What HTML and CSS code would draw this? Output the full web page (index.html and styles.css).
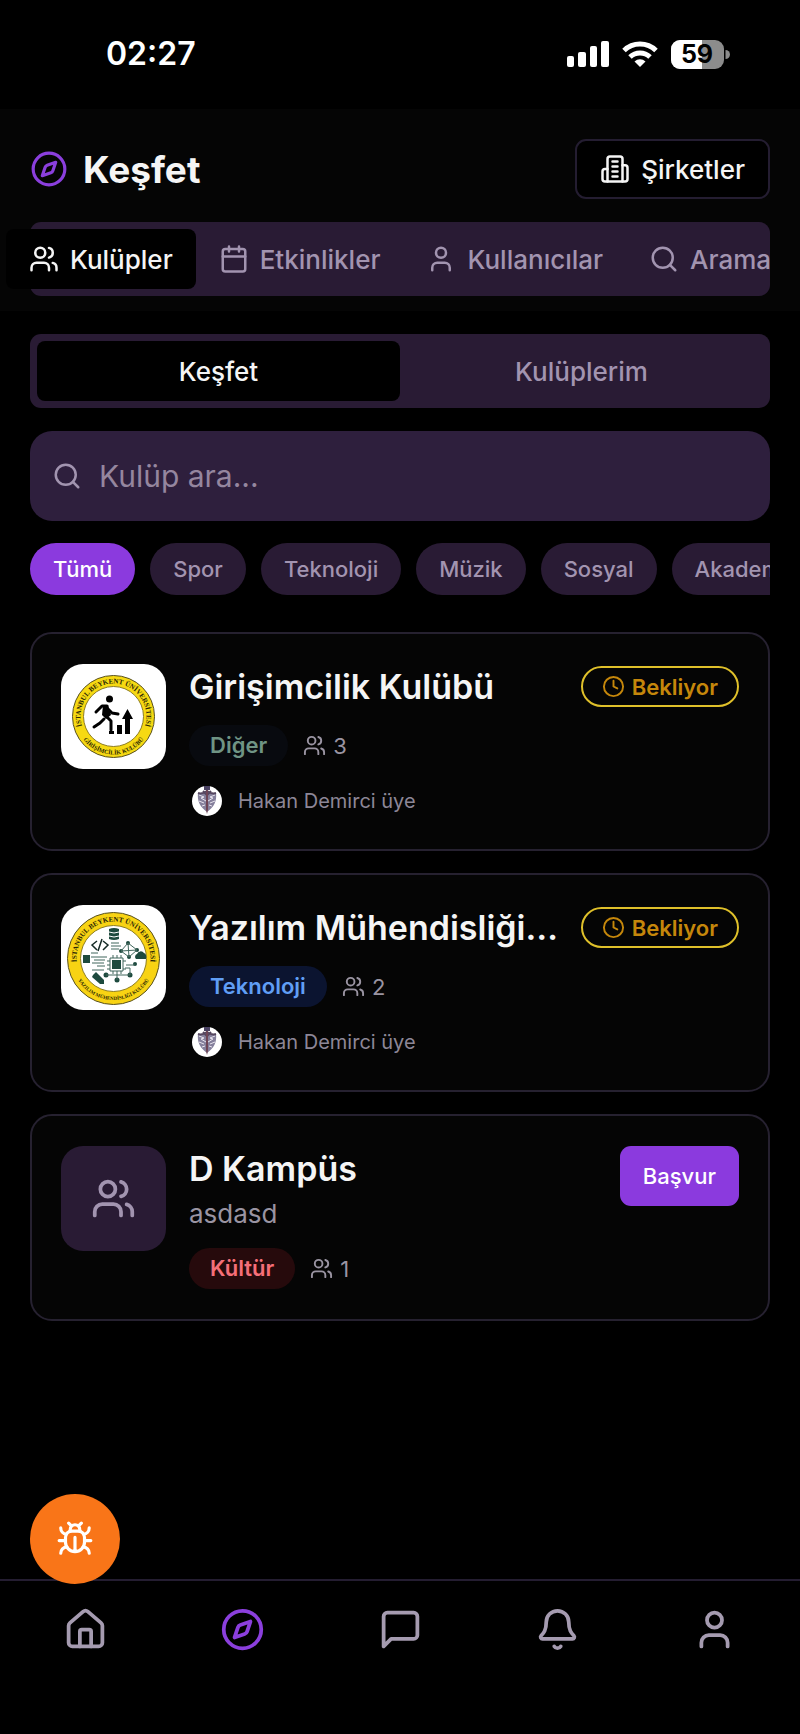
FILE: index.html
```html
<!DOCTYPE html>
<html lang="tr">
<head>
    <meta charset="UTF-8">
    <meta name="viewport" content="width=device-width, initial-scale=1.0">
    <title>Keşfet</title>
    <link rel="stylesheet" href="styles.css">
</head>
<body>
    <!-- Shared icons -->
    <svg class="sprite" aria-hidden="true">
        <symbol id="compass" viewBox="0 0 24 24">
            <path d="m16.24 7.76-1.804 5.411a2 2 0 0 1-1.265 1.265L7.76 16.24l1.804-5.411a2 2 0 0 1 1.265-1.265z"/>
            <circle cx="12" cy="12" r="10"/>
        </symbol>
        <symbol id="building" viewBox="0 0 24 24">
            <path d="M6 22V4a2 2 0 0 1 2-2h8a2 2 0 0 1 2 2v18Z"/>
            <path d="M6 12H4a2 2 0 0 0-2 2v6a2 2 0 0 0 2 2h2M18 9h2a2 2 0 0 1 2 2v9a2 2 0 0 1-2 2h-2"/>
            <path d="M10 6h4M10 10h4M10 14h4M10 18h4"/>
        </symbol>
        <symbol id="users" viewBox="0 0 24 24">
            <path d="M16 21v-2a4 4 0 0 0-4-4H6a4 4 0 0 0-4 4v2"/>
            <circle cx="9" cy="7" r="4"/>
            <path d="M22 21v-2a4 4 0 0 0-3-3.87M16 3.13a4 4 0 0 1 0 7.75"/>
        </symbol>
        <symbol id="calendar" viewBox="0 0 24 24">
            <path d="M8 2v4M16 2v4M3 10h18"/>
            <rect x="3" y="4" width="18" height="18" rx="2"/>
        </symbol>
        <symbol id="user" viewBox="0 0 24 24">
            <path d="M19 21v-2a4 4 0 0 0-4-4H9a4 4 0 0 0-4 4v2"/>
            <circle cx="12" cy="7" r="4"/>
        </symbol>
        <symbol id="search" viewBox="0 0 24 24">
            <circle cx="11" cy="11" r="8"/>
            <path d="m21 21-4.3-4.3"/>
        </symbol>
        <symbol id="clock" viewBox="0 0 24 24">
            <circle cx="12" cy="12" r="10"/>
            <path d="M12 6v6l4 2"/>
        </symbol>
        <symbol id="home" viewBox="0 0 24 24">
            <path d="M15 21v-8a1 1 0 0 0-1-1h-4a1 1 0 0 0-1 1v8"/>
            <path d="M3 10a2 2 0 0 1 .709-1.528l7-5.999a2 2 0 0 1 2.582 0l7 5.999A2 2 0 0 1 21 10v9a2 2 0 0 1-2 2H5a2 2 0 0 1-2-2z"/>
        </symbol>
        <symbol id="message" viewBox="0 0 24 24">
            <path d="M21 15a2 2 0 0 1-2 2H7l-4 4V5a2 2 0 0 1 2-2h14a2 2 0 0 1 2 2z"/>
        </symbol>
        <symbol id="bell" viewBox="0 0 24 24">
            <path d="M10.268 21a2 2 0 0 0 3.464 0"/>
            <path d="M3.262 15.326A1 1 0 0 0 4 17h16a1 1 0 0 0 .74-1.673C19.41 13.956 18 12.499 18 8A6 6 0 0 0 6 8c0 4.499-1.411 5.956-2.738 7.326"/>
        </symbol>
        <symbol id="bug" viewBox="0 0 24 24">
            <path d="m8 2 1.88 1.88M14.12 3.88 16 2M9 7.13v-1a3.003 3.003 0 1 1 6 0v1"/>
            <path d="M12 20c-3.3 0-6-2.7-6-6v-3a4 4 0 0 1 4-4h4a4 4 0 0 1 4 4v3c0 3.3-2.7 6-6 6M12 20v-9"/>
            <path d="M6.53 9C4.6 8.8 3 7.1 3 5M6 13H2M3 21c0-2.1 1.7-3.9 3.8-4M20.97 5c0 2.1-1.6 3.8-3.5 4M22 13h-4M17.2 17c2.1.1 3.8 1.9 3.8 4"/>
        </symbol>
        <symbol id="avatar" viewBox="0 0 30 30">
            <circle cx="15" cy="15" r="15" fill="#fff"/>
            <path d="M12 0h6v4h-6z" fill="#4a4262"/>
            <path d="M6 7c3 1 6 0 9-2 3 2 6 3 9 2 1 8-2 14-9 19C8 21 5 15 6 7z" fill="#85809c"/>
            <path d="M7 9l5 2-3 1 5 3M23 9l-5 2 3 1-5 3M7 15l5 2M23 15l-5 2M10 20l3-1M20 20l-3-1" fill="none" stroke="#e8e4ee"/>
            <path d="M6 7c3 1 6 0 9-2 3 2 6 3 9 2M11 5l4 4 4-4" fill="none" stroke="#55465f" stroke-width="2"/>
            <path d="M14 4h2v20l-1 4-1-4z" fill="#6e4556"/>
        </symbol>
    </svg>

    <div class="status-bar">
        <span class="time">02:27</span>
        <div class="status-icons">
            <svg width="42" height="28" viewBox="0 0 42 28" fill="#fff" aria-hidden="true">
                <rect x="0" y="16" width="7" height="11" rx="2"/>
                <rect x="11" y="12" width="8" height="15" rx="2"/>
                <rect x="23" y="6" width="7" height="21" rx="2"/>
                <rect x="34" y="1" width="8" height="26" rx="2"/>
            </svg>
            <svg width="36" height="28" viewBox="0 0 36 28" fill="none" stroke="#fff" stroke-width="5" aria-hidden="true">
                <path d="M2 10.5a23 23 0 0 1 32 0"/>
                <path d="M8 17a14.5 14.5 0 0 1 20 0"/>
                <path d="M12.5 21.5a8 8 0 0 1 11 0L18 27z" fill="#fff" stroke="none"/>
            </svg>
            <svg width="59" height="30" viewBox="0 0 59 30" aria-label="Pil yüzde 59">
                <rect y="1" width="53" height="29" rx="9" fill="#8c8c8c"/>
                <path d="M31 1H9a9 9 0 0 0-9 9v11a9 9 0 0 0 9 9h22z" fill="#fff"/>
                <path d="M54.5 11a4.5 4.5 0 0 1 0 9z" fill="#8c8c8c"/>
                <text class="battery-text" x="26" y="24">59</text>
            </svg>
        </div>
    </div>

    <header class="header">
        <div class="title-row">
            <svg class="icon icon-title"><use href="#compass"/></svg>
            <h1>Keşfet</h1>
            <button type="button" class="companies"><svg class="icon"><use href="#building"/></svg>Şirketler</button>
        </div>
        <div class="tabs">
            <button type="button" class="tab active"><svg class="icon"><use href="#users"/></svg>Kulüpler</button>
            <button type="button" class="tab"><svg class="icon"><use href="#calendar"/></svg>Etkinlikler</button>
            <button type="button" class="tab"><svg class="icon"><use href="#user"/></svg>Kullanıcılar</button>
            <button type="button" class="tab"><svg class="icon"><use href="#search"/></svg>Arama</button>
        </div>
    </header>

    <main class="content">
        <div class="segments">
            <button type="button" class="segment active">Keşfet</button>
            <button type="button" class="segment">Kulüplerim</button>
        </div>

        <label class="search">
            <svg class="icon"><use href="#search"/></svg>
            <input type="text" placeholder="Kulüp ara..." aria-label="Kulüp ara">
        </label>

        <div class="chips">
            <button type="button" class="chip active">Tümü</button>
            <button type="button" class="chip">Spor</button>
            <button type="button" class="chip">Teknoloji</button>
            <button type="button" class="chip">Müzik</button>
            <button type="button" class="chip">Sosyal</button>
            <button type="button" class="chip">Akademik</button>
        </div>

        <div class="clubs">
            <article class="card">
                <svg class="logo" viewBox="0 0 105 105" aria-hidden="true">
                    <rect width="105" height="105" fill="#fff"/>
                    <circle cx="52.5" cy="52.5" r="41" fill="#f6d912" stroke="#57501f"/>
                    <circle cx="52.5" cy="52.5" r="30" fill="#fff" stroke="#8d7d22"/>
                    <path id="arcTop1" d="M22.4 66a33 33 0 1 1 60.2 0" fill="none"/>
                    <path id="arcBottom1" d="M14.5 52.5a38 38 0 0 0 76 0" fill="none"/>
                    <text class="logo-text"><textPath href="#arcTop1" startOffset="50%">İSTANBUL BEYKENT ÜNİVERSİTESİ</textPath></text>
                    <text class="logo-text logo-text-medium"><textPath href="#arcBottom1" startOffset="50%">GİRİŞİMCİLİK KULÜBÜ</textPath></text>
                    <circle cx="48.5" cy="35" r="3.5"/>
                    <path d="M46 42l-5 0-6 6M44 42l1 10 5 5 0 9M45 43l6 6 6 1M43 55l-4 4-6 4" fill="none" stroke="#000" stroke-width="3" stroke-linecap="round" stroke-linejoin="round"/>
                    <path d="M42 41h5l3 10-5 4-4-4z"/>
                    <path d="M48 67h5v3h-5zM56 61h5v9h-5zM64 70V55h-3l5.5-10 5.5 10h-3v15z"/>
                </svg>
                <div class="info">
                    <div class="card-head">
                        <h2>Girişimcilik Kulübü</h2>
                        <span class="pending"><svg class="icon icon-small"><use href="#clock"/></svg>Bekliyor</span>
                    </div>
                    <div class="meta">
                        <span class="tag tag-other">Diğer</span>
                        <span class="count"><svg class="icon icon-small"><use href="#users"/></svg>3</span>
                    </div>
                    <div class="member"><svg class="avatar"><use href="#avatar"/></svg>Hakan Demirci üye</div>
                </div>
            </article>

            <article class="card">
                <svg class="logo" viewBox="0 0 105 105" aria-hidden="true">
                    <rect width="105" height="105" fill="#fff"/>
                    <circle cx="52.5" cy="53.5" r="46" fill="#f8d313" stroke="#57501f"/>
                    <circle cx="52.5" cy="53.5" r="33" fill="#fff" stroke="#8d7d22"/>
                    <path id="arcTop2" d="M18.9 69a37 37 0 1 1 67.2 0" fill="none"/>
                    <path id="arcBottom2" d="M11 53.5a41.5 41.5 0 0 0 83 0" fill="none"/>
                    <text class="logo-text"><textPath href="#arcTop2" startOffset="50%">İSTANBUL BEYKENT ÜNİVERSİTESİ</textPath></text>
                    <text class="logo-text logo-text-small"><textPath href="#arcBottom2" startOffset="50%">YAZILIM MÜHENDİSLİĞİ KULÜBÜ</textPath></text>
                    <g fill="#1d4a3e">
                        <path d="M48 24q5-2 10 0v10q-5 2-10 0zM22 50h7v8h-7z"/>
                        <path d="M75 54a3 3 0 0 1 1-5 4 4 0 0 1 7-1q3 1 2 6z"/>
                        <path d="M32 70l3-3 8 8v4h-4l-8-7z"/>
                        <circle cx="67" cy="38" r="2"/><circle cx="60" cy="46" r="2"/><circle cx="76" cy="45" r="2"/>
                        <circle cx="68" cy="52" r="2"/><circle cx="74" cy="59" r="2"/><circle cx="69" cy="70" r="2.5"/>
                        <circle cx="45" cy="70" r="2.5"/><circle cx="56" cy="75" r="2.5"/>
                        <path d="M51 55h9v9h-9z"/>
                    </g>
                    <g fill="none" stroke="#41675d">
                        <path d="M49 53h13v13H49zM52 50v3M56 50v3M60 50v3M52 66v3M60 66v3M46 56h3M46 60h3M46 64h3M62 56h3M62 64h3"/>
                        <path d="M67 38l-7 8 8 6 8-7zM67 38l1 14M60 46l16-1M65 60h9M56 66v9M45 70h24M69 70v-7h-5"/>
                        <path d="M50 38h8M50 41h10M50 44h8M30 48h7M30 52h16M33 55h11M31 58h12M36 61h8M31 65h12"/>
                        <path d="M48 27q5 2 10 0M48 31q5 2 10 0" stroke="#fff"/>
                    </g>
                    <path d="M36 36l-5 4 5 5M42 36l5 4-5 5M41 34l-4 12" fill="none" stroke="#152a26" stroke-width="1.5"/>
                </svg>
                <div class="info">
                    <div class="card-head">
                        <h2>Yazılım Mühendisliği Kulübü</h2>
                        <span class="pending"><svg class="icon icon-small"><use href="#clock"/></svg>Bekliyor</span>
                    </div>
                    <div class="meta">
                        <span class="tag tag-tech">Teknoloji</span>
                        <span class="count"><svg class="icon icon-small"><use href="#users"/></svg>2</span>
                    </div>
                    <div class="member"><svg class="avatar"><use href="#avatar"/></svg>Hakan Demirci üye</div>
                </div>
            </article>

            <article class="card">
                <div class="logo logo-empty"><svg class="icon icon-large"><use href="#users"/></svg></div>
                <div class="info">
                    <h2>D Kampüs</h2>
                    <p>asdasd</p>
                    <div class="meta">
                        <span class="tag tag-culture">Kültür</span>
                        <span class="count"><svg class="icon icon-small"><use href="#users"/></svg>1</span>
                    </div>
                </div>
                <button type="button" class="apply">Başvur</button>
            </article>
        </div>
    </main>

    <nav class="bottom-nav">
        <button type="button" class="report" aria-label="Hata bildir"><svg class="icon icon-title"><use href="#bug"/></svg></button>
        <a href="#" aria-label="Ana sayfa"><svg class="icon icon-large"><use href="#home"/></svg></a>
        <a href="#" class="active" aria-label="Keşfet"><svg class="icon icon-large"><use href="#compass"/></svg></a>
        <a href="#" aria-label="Mesajlar"><svg class="icon icon-large"><use href="#message"/></svg></a>
        <a href="#" aria-label="Bildirimler"><svg class="icon icon-large"><use href="#bell"/></svg></a>
        <a href="#" aria-label="Profil"><svg class="icon icon-large"><use href="#user"/></svg></a>
    </nav>
</body>
</html>
```

FILE: styles.css
```css
* {
    box-sizing: border-box;
}
body {
    margin: 0;
    min-height: 100vh;
    display: flex;
    flex-direction: column;
    background-color: #000;
    color: #f5f5f5;
    font-family: Inter, sans-serif;
    font-size: 26px;
}
h1, h2, p {
    margin: 0;
}
button {
    border: none;
    font-family: inherit;
    font-size: 26px;
    font-weight: 500;
    cursor: pointer;
}
.sprite {
    position: absolute;
    width: 0;
    height: 0;
}
.icon {
    width: 30px;
    height: 30px;
    flex-shrink: 0;
    fill: none;
    stroke: currentColor;
    stroke-width: 2;
    stroke-linecap: round;
    stroke-linejoin: round;
}
.icon-small {
    width: 23px;
    height: 23px;
}
.icon-title {
    width: 38px;
    height: 38px;
}
.icon-large {
    width: 45px;
    height: 45px;
}

/* Status bar */
.status-bar {
    display: flex;
    justify-content: space-between;
    align-items: center;
    height: 109px;
    padding: 0 70px 2px 106px;
}
.time {
    font-size: 32px;
    font-weight: 600;
    color: #fff;
}
.status-icons {
    display: flex;
    align-items: center;
    gap: 13px;
}
.battery-text {
    font-size: 25px;
    font-weight: 700;
    text-anchor: middle;
}

/* Header */
.header {
    padding: 30px 30px 15px;
    background-color: #050505;
}
.title-row {
    display: flex;
    align-items: center;
    gap: 15px;
    margin-bottom: 23px;
}
.title-row .icon-title {
    color: #8b3fdd;
}
h1 {
    flex: 1;
    font-size: 37px;
    font-weight: 700;
}
.companies {
    display: flex;
    align-items: center;
    gap: 11px;
    height: 60px;
    padding: 0 23px;
    border: 2px solid #241d31;
    border-radius: 11px;
    background-color: #000;
    color: #f5f5f5;
}
.tabs {
    display: flex;
    justify-content: center;
    padding: 7px;
    border-radius: 11px;
    background-color: #291b34;
}
.tab {
    display: flex;
    flex-shrink: 0;
    align-items: center;
    gap: 11px;
    height: 60px;
    padding: 0 23px;
    border-radius: 8px;
    background: none;
    color: #a294b0;
}
.tab.active, .segment.active {
    background-color: #000;
    color: #f5f5f5;
}

/* Content */
.content {
    flex: 1;
    padding: 23px 30px;
}
.segments {
    display: flex;
    padding: 7px;
    border-radius: 11px;
    background-color: #291b34;
}
.segment {
    flex: 1;
    height: 60px;
    border-radius: 8px;
    background: none;
    color: #a294b0;
}
.search {
    display: flex;
    align-items: center;
    gap: 17px;
    height: 90px;
    margin: 23px 0 22px;
    padding: 0 22px;
    border-radius: 22px;
    background-color: #2e1f3d;
    color: #a294b0;
}
.search input {
    flex: 1;
    min-width: 0;
    padding: 0;
    border: none;
    outline: none;
    background: none;
    color: #f5f5f5;
    font-family: inherit;
    font-size: 30px;
}
.search input::placeholder {
    color: #95869f;
}
.chips {
    display: flex;
    gap: 15px;
    overflow: hidden;
}
.chip {
    flex-shrink: 0;
    height: 52px;
    padding: 0 23px;
    border-radius: 26px;
    background-color: #291b34;
    color: #a294b0;
    font-size: 22px;
}
.chip.active {
    background-color: #8b3ade;
    color: #fff;
}

/* Club cards */
.clubs {
    display: flex;
    flex-direction: column;
    gap: 22px;
    margin-top: 37px;
}
.card {
    display: flex;
    align-items: flex-start;
    gap: 23px;
    padding: 30px 29px;
    border: 2px solid #262130;
    border-radius: 22px;
    background-color: #050505;
}
.logo {
    width: 105px;
    height: 105px;
    flex-shrink: 0;
    border-radius: 22px;
}
.logo-empty {
    display: flex;
    align-items: center;
    justify-content: center;
    background-color: #291b34;
    color: #a294b0;
}
.logo-text {
    font-family: "Liberation Serif", serif;
    font-size: 7px;
    font-weight: 700;
    fill: #2b2705;
    text-anchor: middle;
}
.logo-text-medium {
    font-size: 6px;
}
.logo-text-small {
    font-size: 5px;
}
.info {
    flex: 1;
    min-width: 0;
}
.card-head {
    display: flex;
    align-items: center;
    justify-content: space-between;
    gap: 22px;
}
h2 {
    overflow: hidden;
    font-size: 34px;
    font-weight: 600;
    line-height: 45px;
    text-overflow: ellipsis;
    white-space: nowrap;
}
.info p {
    margin-top: 4px;
    color: #9a94a2;
    line-height: 37px;
}
.pending {
    display: flex;
    flex-shrink: 0;
    align-items: center;
    gap: 7px;
    height: 41px;
    padding: 0 19px;
    border: 2px solid #dfc02a;
    border-radius: 21px;
    color: #c5870b;
    font-size: 22px;
    font-weight: 600;
}
.meta {
    display: flex;
    align-items: center;
    gap: 15px;
    margin-top: 16px;
    font-size: 22px;
}
.tag {
    padding: 0 21px;
    border-radius: 21px;
    font-weight: 600;
    line-height: 41px;
}
.tag-other {
    background-color: #080a0f;
    color: #6f9484;
}
.tag-tech {
    background-color: #0b1430;
    color: #609ef5;
}
.tag-culture {
    background-color: #260a0c;
    color: #f56f78;
}
.count {
    display: flex;
    align-items: center;
    gap: 7px;
    color: #9a94a2;
}
.member {
    display: flex;
    align-items: center;
    gap: 16px;
    height: 37px;
    margin-top: 16px;
    padding-left: 3px;
    color: #8d8797;
    font-size: 20px;
}
.avatar {
    width: 30px;
    height: 30px;
}
.apply {
    height: 60px;
    padding: 0 23px;
    border-radius: 11px;
    background-color: #8b3ade;
    color: #fff;
    font-size: 22px;
}

/* Bottom navigation */
.bottom-nav {
    position: relative;
    display: flex;
    padding: 26px 7px 82px;
    border-top: 2px solid #241d31;
}
.bottom-nav a {
    display: flex;
    flex: 1;
    justify-content: center;
    color: #a59bb0;
}
.bottom-nav a.active {
    color: #8b3fdd;
}
.report {
    position: absolute;
    top: -87px;
    left: 30px;
    display: flex;
    align-items: center;
    justify-content: center;
    width: 90px;
    height: 90px;
    padding: 0;
    border-radius: 50%;
    background-color: #f97518;
    color: #fff;
}
```
